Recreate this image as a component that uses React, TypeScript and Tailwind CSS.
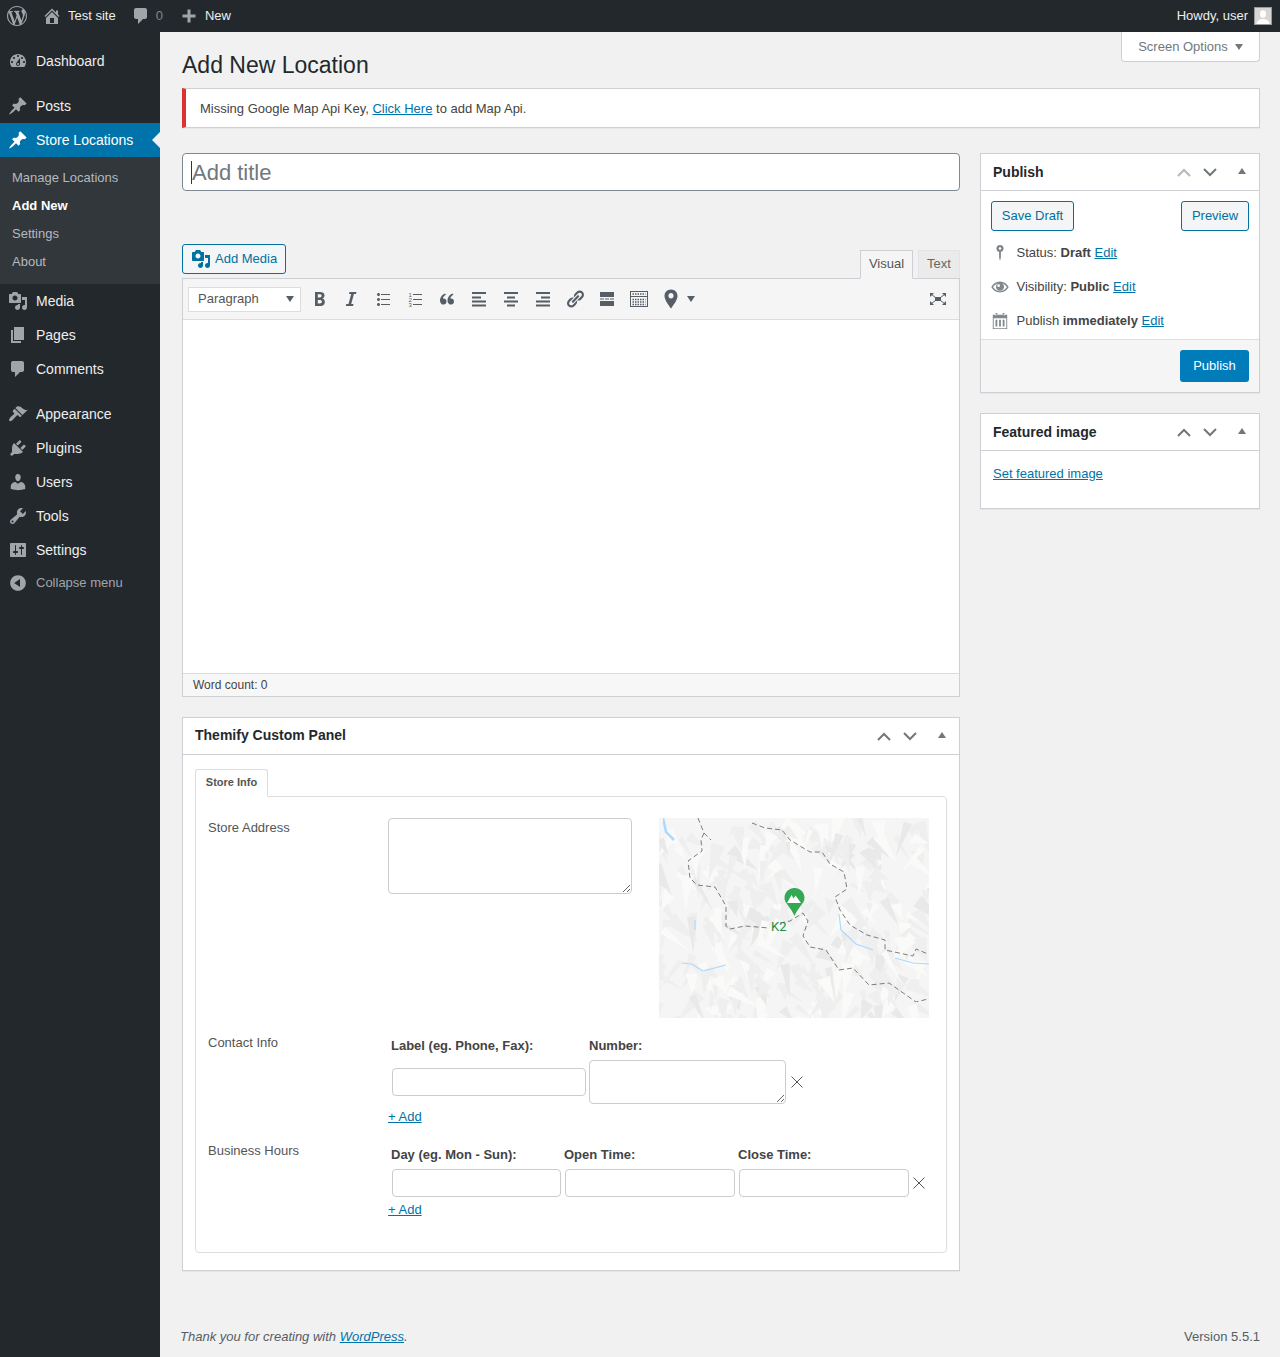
import type { ReactNode } from "react";

const P = {
  wp: "M20 10c0-5.51-4.49-10-10-10C4.48 0 0 4.49 0 10c0 5.52 4.48 10 10 10 5.51 0 10-4.48 10-10zM7.78 15.37L4.37 6.22c.55-.02 1.17-.08 1.17-.08.5-.06.44-1.13-.06-1.11 0 0-1.45.11-2.37.11-.18 0-.37 0-.58-.01C4.12 2.69 6.87 1.11 10 1.11c2.33 0 4.45.87 6.05 2.34-.68-.11-1.65.39-1.65 1.58 0 .74.45 1.36.9 2.1.35.61.55 1.36.55 2.46 0 1.49-1.4 5-1.4 5l-3.03-8.37c.54-.02.82-.17.82-.17.5-.05.44-1.25-.06-1.22 0 0-1.44.12-2.38.12-.87 0-2.33-.12-2.33-.12-.5-.03-.56 1.2-.06 1.22l.92.08 1.26 3.41zM17.41 10c.24-.64.74-1.87.43-4.25.7 1.29 1.05 2.71 1.05 4.25 0 3.29-1.73 6.24-4.4 7.78.97-2.59 1.94-5.2 2.92-7.78zM6.1 18.09C3.12 16.65 1.11 13.53 1.11 10c0-1.3.23-2.48.72-3.59C3.25 10.3 4.67 14.2 6.1 18.09zm4.03-6.63l2.58 6.98c-.86.29-1.76.45-2.71.45-.79 0-1.57-.11-2.29-.33.81-2.38 1.62-4.74 2.42-7.1z",
  home: "M16 8.5l1.53 1.53-1.06 1.06L10 4.62l-6.47 6.47-1.06-1.06L10 2.5l4 4v-2h2v4zm-6-2.46l6 5.99V18H4v-5.97zM12 17v-5H8v5h4z",
  comment: "M5 2h9c1.1 0 2 .9 2 2v7c0 1.1-.9 2-2 2h-2l-5 5v-5H5c-1.1 0-2-.9-2-2V4c0-1.1.9-2 2-2z",
  plus: "M16.500 8.500v3h-5v5h-3v-5h-5v-3h5v-5h3v5z",
  dashboard: "M3.76 16h12.48c1.1-1.37 1.76-3.11 1.76-5 0-4.42-3.58-8-8-8s-8 3.58-8 8c0 1.89.66 3.63 1.76 5zM10 4c.55 0 1 .45 1 1s-.45 1-1 1-1-.45-1-1 .45-1 1-1zM6 6c.55 0 1 .45 1 1s-.45 1-1 1-1-.45-1-1 .45-1 1-1zm8 0c.55 0 1 .45 1 1s-.45 1-1 1-1-.45-1-1 .45-1 1-1zm-5.37 5.55L12 7v6c0 1.1-.9 2-2 2s-2-.9-2-2c0-.57.24-1.08.63-1.45zM4 10c.55 0 1 .45 1 1s-.45 1-1 1-1-.45-1-1 .45-1 1-1zm12 0c.55 0 1 .45 1 1s-.45 1-1 1-1-.45-1-1 .45-1 1-1zm-5 3c0-.55-.45-1-1-1s-1 .45-1 1 .45 1 1 1 1-.45 1-1z",
  pin: "M10.44 3.02l1.82-1.82 6.36 6.35-1.83 1.82c-1.05-.68-2.48-.57-3.41.36l-.75.75c-.92.93-1.04 2.35-.35 3.41l-1.83 1.82-2.41-2.41-2.8 2.79c-.42.42-3.38 2.71-3.8 2.29s1.86-3.39 2.28-3.81l2.79-2.79L4.1 9.36l1.83-1.82c1.05.69 2.48.57 3.4-.36l.75-.75c.93-.92 1.05-2.35.36-3.41z",
  media: "M13 11V4c0-.55-.45-1-1-1h-1.67L9 1H5L3.67 3H2c-.55 0-1 .45-1 1v7c0 .55.45 1 1 1h10c.55 0 1-.45 1-1zM7 4.5c1.38 0 2.5 1.12 2.5 2.5S8.38 9.5 7 9.5 4.5 8.38 4.5 7 5.62 4.5 7 4.5zM14 6h5v10.5c0 1.38-1.12 2.5-2.5 2.5S14 17.88 14 16.5s1.12-2.5 2.5-2.5c.17 0 .34.02.5.05V9h-3V6zm-4 8.05V13h2v3.5c0 1.38-1.12 2.5-2.5 2.5S7 17.88 7 16.5 8.12 14 9.5 14c.17 0 .34.02.5.05z",
  page: "M6 15V2h10v13H6zm-1 1h8v2H3V5h2v11z",
  appearance: "M14.48 11.06L7.41 3.99l1.5-1.5c.5-.56 2.3-.47 3.51.32 1.21.8 1.43 1.28 2.91 2.1 1.18.64 2.45 1.26 4.45.85zm-.71.71L6.7 4.7 4.93 6.47c-.39.39-.39 1.02 0 1.41l1.06 1.06c.39.39.39 1.03 0 1.42-.6.6-1.43 1.11-2.21 1.69-.35.26-.7.53-1.01.84-1.43 1.43-1.87 2.98-1.57 3.7.3.7 1.5.9 3.2-.4.8-.6 1.5-1.6 2.3-2.5.8-.9 1.6-1.6 2.2-2.1.4-.39 1.03-.39 1.42 0l1.06 1.06c.39.39 1.02.39 1.41 0z",
  plugins: "M13.11 4.36L9.87 7.6 8 5.73l3.24-3.24c.35-.34 1.05-.2 1.56.32.52.51.66 1.21.31 1.55zm-8 1.77l.91-1.12 9.01 9.01-1.19.84c-.71.71-2.63 1.16-3.82 1.16H6.14L4.9 17.26c-.59.59-1.54.59-2.12 0-.59-.58-.59-1.53 0-2.12l1.24-1.24v-3.88c0-1.13.4-3.19 1.09-3.89zm7.26 3.97l3.24-3.24c.34-.35 1.04-.21 1.55.31.52.51.66 1.21.31 1.55l-3.24 3.25z",
  users: "M10 9.25c-2.27 0-2.73-3.44-2.73-3.44C7 4.02 7.82 2 9.97 2c2.16 0 2.98 2.02 2.71 3.81 0 0-.41 3.44-2.68 3.44zm0 2.57L12.72 10c2.39 0 4.52 2.33 4.52 4.53v2.49s-3.65 1.13-7.24 1.13c-3.65 0-7.24-1.13-7.24-1.13v-2.49c0-2.25 1.94-4.48 4.47-4.48z",
  tools: "M16.68 9.77c-1.34 1.34-3.3 1.67-4.95.99l-5.41 6.52c-.99.99-2.59.99-3.58 0s-.99-2.59 0-3.57l6.52-5.42c-.68-1.65-.35-3.61.99-4.95 1.28-1.28 3.12-1.62 4.72-1.06l-2.89 2.89 2.82 2.82 2.86-2.87c.53 1.58.18 3.39-1.08 4.65zM3.81 16.21c.4.39 1.04.39 1.43 0 .4-.4.4-1.04 0-1.43-.39-.4-1.03-.4-1.43 0-.39.39-.39 1.03 0 1.43z",
  settings: "M18 16V4c0-.55-.45-1-1-1H3c-.55 0-1 .45-1 1v12c0 .55.45 1 1 1h14c.55 0 1-.45 1-1zM8 11h1c.55 0 1 .45 1 1s-.45 1-1 1H8v1.5c0 .28-.22.5-.5.5s-.5-.22-.5-.5V13H6c-.55 0-1-.45-1-1s.45-1 1-1h1V5.5c0-.28.22-.5.5-.5s.5.22.5.5V11zm5-2h-1c-.55 0-1-.45-1-1s.45-1 1-1h1V5.5c0-.28.22-.5.5-.5s.5.22.5.5V7h1c.55 0 1 .45 1 1s-.45 1-1 1h-1v5.5c0 .28-.22.5-.5.5s-.5-.22-.5-.5V9z",
  collapse: "M10 2.16c4.33 0 7.84 3.51 7.84 7.84s-3.51 7.84-7.84 7.84S2.16 14.33 2.16 10 5.71 2.16 10 2.16zm2 11.72V6.12L6.18 9.97z",
  bold: "M6 3v14h5c1.500 0 2.700-.4 3.500-1.100.9-.7 1.300-1.700 1.300-3 0-.9-.2-1.600-.6-2.200s-1-.9-1.800-1.100v-.1c.6-.1 1.100-.4 1.500-1s.6-1.200.6-2c0-1.200-.4-2.100-1.300-2.700C13.400 3.300 12 3 10.200 3H6zm2.800 5.500V5.300h1.500c.8 0 1.400.1 1.700.3.4.3.6.7.6 1.200 0 .6-.2 1-.5 1.300s-.9.400-1.700.4H8.800zm0 2.400h1.700c1.600 0 2.400.6 2.400 1.800 0 .6-.2 1.100-.6 1.400s-.9.500-1.700.500H8.800v-3.700z",
  italic: "M15.500 3h-7l-.5 2h2.200l-2.700 10H5.300l-.5 2h7.200l.5-2H10.200l2.700-10H15z",
  ul: "M5.5 7C4.67 7 4 6.33 4 5.5 4 4.68 4.67 4 5.5 4 6.32 4 7 4.68 7 5.5 7 6.33 6.32 7 5.5 7zM8 5h9v1H8V5zm-2.5 7c-.83 0-1.5-.67-1.5-1.5C4 9.68 4.67 9 5.5 9c.82 0 1.5.68 1.5 1.5 0 .83-.68 1.5-1.5 1.5zM8 10h9v1H8v-1zm-2.5 7c-.83 0-1.5-.67-1.5-1.5 0-.82.67-1.5 1.5-1.5.82 0 1.5.68 1.5 1.5 0 .83-.68 1.500-1.500 1.500zM8 15h9v1H8v-1z",
  quote: "M9.500 12.600c0 1.800-1.300 3-2.900 3C4.700 15.600 3 14 3 11.400 3 8.200 5.200 5.400 8.200 4.400l.7 1.400C7.100 6.700 6 8 5.900 9.500c2-.3 3.600 1 3.600 3.100zm7.500 0c0 1.800-1.300 3-2.900 3-1.900 0-3.600-1.600-3.600-4.200 0-3.200 2.200-6 5.200-7l.7 1.400c-1.800.9-2.900 2.200-3 3.700 2-.3 3.600 1 3.600 3.100z",
  alignLeft: "M3 3h14v2H3zM3 7.500h9v2H3zM3 11.500h14v2H3zM3 15.500h14v2H3z",
  alignCenter: "M3 3h14v2H3zM6 7.500h8v2H6zM3 11.500h14v2H3zM6 15.500h8v2H6z",
  alignRight: "M3 3h14v2H3zM8 7.500h9v2H8zM3 11.500h14v2H3zM3 15.500h14v2H3z",
  link: "M17.74 2.76c1.68 1.69 1.68 4.41 0 6.1l-1.53 1.52c-1.12 1.12-2.7 1.47-4.14 1.09l2.62-2.61.76-.77.76-.76c.84-.84.84-2.2 0-3.04-.84-.85-2.2-.85-3.04 0l-.77.76-3.38 3.38c-.37-1.44-.02-3.02 1.1-4.14l1.52-1.53c1.69-1.68 4.42-1.68 6.1 0zM8.59 13.43l5.34-5.34c.42-.42.42-1.1 0-1.52-.44-.43-1.13-.39-1.53 0l-5.33 5.34c-.42.42-.42 1.1 0 1.52.44.43 1.13.39 1.52 0zm-.76 2.29l4.14-4.15c.38 1.44.03 3.02-1.09 4.14l-1.52 1.53c-1.69 1.68-4.41 1.68-6.1 0-1.68-1.68-1.68-4.42 0-6.1l1.53-1.52c1.12-1.12 2.7-1.47 4.14-1.1l-4.14 4.15c-.85.84-.85 2.2 0 3.05.84.84 2.2.84 3.04 0z",
  more: "M3 3h14v5H3zM3 9.500h4v1H3zM8 9.500h4v1H8zM13 9.500h4v1h-4zM3 12h14v5H3z",
  mapPin: "M10 .5C6 .5 3.500 3.400 3.500 6.900c0 4 4 8.800 6.500 12.600 2.500-3.800 6.500-8.600 6.500-12.600C16.500 3.400 14 .5 10 .5zm0 9c-1.500 0-2.600-1.200-2.600-2.700S8.500 4.100 10 4.100s2.600 1.200 2.600 2.700S11.500 9.500 10 9.500z",
  status: "M10 1a4 4 0 0 1 1 7.870V15l-1 4-1-4V8.870A4 4 0 0 1 10 1zm0 2.500a1.400 1.400 0 1 0 0 2.800 1.400 1.400 0 0 0 0-2.800z",
  eye: "M10 4C5.700 4 2.300 6.500.300 10c2 3.500 5.400 6 9.700 6s7.700-2.500 9.700-6C17.700 6.500 14.300 4 10 4zM8 5.700a4.500 4.500 0 1 0 4 0c2.200.5 4.200 2.200 5.700 4.300-1.900 2.700-4.500 4.600-7.700 4.600S4.200 12.700 2.300 10C3.800 7.900 5.800 6.200 8 5.700zM8.500 7a1.500 1.500 0 1 1 0 3 1.500 1.500 0 0 1 0-3z",
  calendar: "M5 1h2v2h6V1h2v2h3v16H2V3h3zm-2 6v11h14V7zm2-4.900V4h1V2.100zm9 0V4h1V2.100zM5 8.500h2V16H5zm4 0h2V16H9zm4 0h2V16h-2z",
};

function Icon({ d, className }: { d: string; className?: string }) {
  return (
    <svg viewBox="0 0 20 20" fill="currentColor" fillRule="evenodd" className={className}>
      <path d={d} />
    </svg>
  );
}

function MenuItem({ icon, label, active, className }: { icon: string; label: string; active?: boolean; className?: string }) {
  return (
    <div className={`relative flex h-[34px] items-center ${active ? "bg-[#0073aa] text-white" : "text-[#eeeeee]"} ${className ?? ""}`}>
      <Icon d={icon} className={`ml-[8px] h-5 w-5 ${active ? "text-white" : "text-[#a0a5aa]"}`} />
      <span className="ml-2 text-[14px]">{label}</span>
      {active && (
        <span className="absolute right-0 top-[9px] h-0 w-0 border-y-8 border-r-8 border-y-transparent border-r-[#f1f1f1]" />
      )}
    </div>
  );
}

function Sidebar() {
  return (
    <aside className="w-[160px] shrink-0 bg-[#23282d] pt-3">
      <MenuItem icon={P.dashboard} label="Dashboard" className="mb-[11px]" />
      <MenuItem icon={P.pin} label="Posts" />
      <MenuItem icon={P.pin} label="Store Locations" active />
      <div className="flex flex-col bg-[#32373c] pb-[8px] pl-3 pt-[7px] text-[13px] leading-[28px] text-[#b4b9be]">
        <span>Manage Locations</span>
        <span className="font-bold text-white">Add New</span>
        <span>Settings</span>
        <span>About</span>
      </div>
      <MenuItem icon={P.media} label="Media" />
      <MenuItem icon={P.page} label="Pages" />
      <MenuItem icon={P.comment} label="Comments" className="mb-[11px]" />
      <MenuItem icon={P.appearance} label="Appearance" />
      <MenuItem icon={P.plugins} label="Plugins" />
      <MenuItem icon={P.users} label="Users" />
      <MenuItem icon={P.tools} label="Tools" />
      <MenuItem icon={P.settings} label="Settings" />
      <div className="flex h-[32px] items-center text-[#a0a5aa]">
        <Icon d={P.collapse} className="ml-[8px] h-5 w-5" />
        <span className="ml-2 text-[13px]">Collapse menu</span>
      </div>
    </aside>
  );
}

function TopBar() {
  return (
    <header className="flex h-8 items-center bg-[#23282d] text-[13px] text-[#eeeeee]">
      <Icon d={P.wp} className="ml-[7px] h-5 w-5 text-[#a0a5aa]" />
      <Icon d={P.home} className="ml-[15px] h-5 w-5 text-[#a0a5aa]" />
      <span className="ml-[6px]">Test site</span>
      <Icon d={P.comment} className="ml-[15px] h-5 w-5 text-[#a0a5aa]" />
      <span className="ml-[5px] text-[#82878c]">0</span>
      <Icon d={P.plus} className="ml-[16px] h-5 w-5 text-[#a0a5aa]" />
      <span className="ml-[6px]">New</span>
      <span className="ml-auto">Howdy, user</span>
      <svg viewBox="0 0 18 18" className="ml-[6px] mr-2 h-[18px] w-[18px]">
        <rect width="18" height="18" fill="#9a9a9a" />
        <rect x="1" y="1" width="16" height="16" fill="#d6d6d6" />
        <ellipse cx="9" cy="7" rx="3" ry="3.800" fill="#fff" />
        <path d="M2.500 17c.3-3.500 3-5 6.500-5s6.200 1.500 6.500 5z" fill="#fff" />
      </svg>
    </header>
  );
}

function BoxControls({ muted }: { muted?: boolean }) {
  return (
    <div className="flex items-center">
      <svg viewBox="0 0 14 9" fill="none" strokeWidth="2" className={`h-[9px] w-[14px] ${muted ? "stroke-[#b4b9be]" : "stroke-[#72777c]"}`}>
        <path d="M1 8l6-6 6 6" />
      </svg>
      <svg viewBox="0 0 14 9" fill="none" strokeWidth="2" className="ml-3 h-[9px] w-[14px] stroke-[#72777c]">
        <path d="M1 1l6 6 6-6" />
      </svg>
      <svg viewBox="0 0 8 6" className="mb-[2px] ml-[21px] mr-[13px] h-[6px] w-2 fill-[#72777c]">
        <path d="M4 0l4 6H0z" />
      </svg>
    </div>
  );
}

function Postbox({ title, muted, children, className, titleClass }: { title: string; muted?: boolean; children: ReactNode; className?: string; titleClass?: string }) {
  return (
    <section className={`border border-[#ccd0d4] bg-white shadow-[0_1px_1px_rgba(0,0,0,0.04)] ${className ?? ""}`}>
      <div className="flex h-[37px] items-center justify-between border-b border-[#ccd0d4] pl-3">
        <h2 className={`text-[14px] font-bold text-[#23282d] ${titleClass ?? ""}`}>{title}</h2>
        <BoxControls muted={muted} />
      </div>
      {children}
    </section>
  );
}

function OutlineButton({ children, className }: { children: ReactNode; className?: string }) {
  return (
    <button className={`h-[30px] rounded-[3px] border border-[#0071a1] bg-[#f3f5f6] text-[13px] text-[#0071a1] ${className ?? ""}`}>
      {children}
    </button>
  );
}

function TextLink({ children }: { children: ReactNode }) {
  return <a className="text-[#0073aa] underline">{children}</a>;
}

function Toolbar() {
  const icons = [P.bold, P.italic, P.ul];
  return (
    <div className="flex h-[41px] items-center border-b border-[#dcdcde] bg-[#f5f5f5] pl-[5px] text-[#555d66]">
      <div className="flex h-[25px] w-[113px] items-center justify-between border border-[#dddddd] bg-white pl-[9px] pr-[6px] text-[13px] text-[#555555]">
        <span>Paragraph</span>
        <svg viewBox="0 0 8 6" className="h-[6px] w-2 fill-[#555d66]">
          <path d="M0 0h8L4 6z" />
        </svg>
      </div>
      <div className="ml-2 flex gap-3">
        {icons.map((d) => (
          <Icon key={d} d={d} className="h-5 w-5" />
        ))}
        <svg viewBox="0 0 20 20" className="h-5 w-5 fill-[#555d66]">
          <text x="3.500" y="7.500" fontSize="6" fontFamily="Liberation Sans, sans-serif">1</text>
          <text x="3.500" y="12.500" fontSize="6" fontFamily="Liberation Sans, sans-serif">2</text>
          <text x="3.500" y="17.500" fontSize="6" fontFamily="Liberation Sans, sans-serif">3</text>
          <path d="M8 5h9v1H8zM8 10h9v1H8zM8 15h9v1H8z" />
        </svg>
        <Icon d={P.quote} className="h-5 w-5" />
        <Icon d={P.alignLeft} className="h-5 w-5" />
        <Icon d={P.alignCenter} className="h-5 w-5" />
        <Icon d={P.alignRight} className="h-5 w-5" />
        <Icon d={P.link} className="h-5 w-5" />
        <Icon d={P.more} className="h-5 w-5" />
        <svg viewBox="0 0 20 20" fill="none" className="h-5 w-5 stroke-[#555d66]">
          <rect x="1.500" y="2.500" width="17" height="15" />
          <path d="M1.500 7.500h17" />
          <path d="M3.500 5h13M3.500 10.500h13M3.500 13h13M3.500 15.500h13" strokeWidth="1.500" strokeDasharray="1.500 1" />
        </svg>
        <Icon d={P.mapPin} className="h-5 w-5" />
      </div>
      <svg viewBox="0 0 8 6" className="ml-[6px] h-[6px] w-2 fill-[#555d66]">
        <path d="M0 0h8L4 6z" />
      </svg>
      <svg viewBox="0 0 20 20" className="ml-auto mr-[11px] h-5 w-5 fill-[#555d66]">
        <path d="M7 8h6v4H7z" />
        <path d="M2 4h4L2 8zM18 4v4l-4-4zM2 16v-4l4 4zM18 16h-4l4-4z" />
        <path d="M3 5l5 4M17 5l-5 4M3 15l5-4M17 15l-5-4" stroke="#555d66" fill="none" />
      </svg>
    </div>
  );
}

function Editor() {
  return (
    <div className="mt-[53px]">
      <div className="flex items-end justify-between">
        <OutlineButton className="mb-[4px] flex w-[104px] items-center pl-[8px]">
          <Icon d={P.media} className="h-[20px] w-[20px]" />
          <span className="ml-[4px]">Add Media</span>
        </OutlineButton>
        <div className="flex text-[13px] text-[#555555]">
          <div className="relative -mb-px h-[29px] w-[53px] border border-[#ccd0d4] border-b-[#f5f5f5] bg-[#f5f5f5] text-center leading-[26px]">
            Visual
          </div>
          <div className="ml-[5px] h-[28px] w-[42px] border border-b-0 border-[#e2e4e7] bg-[#ebebeb] text-center leading-[26px] text-[#666666]">
            Text
          </div>
        </div>
      </div>
      <div className="border border-[#ccd0d4] bg-white">
        <Toolbar />
        <div className="h-[353px] bg-white" />
        <div className="flex h-[23px] items-center border-t border-[#dcdcde] bg-[#f7f7f7] pl-[10px] text-[12px] text-[#444444]">
          Word count: 0
        </div>
      </div>
    </div>
  );
}

// pseudo-random terrain facets for the map tile
function terrain() {
  let seed = 4711;
  const rnd = () => {
    seed = (seed * 16807) % 2147483647;
    return seed / 2147483647;
  };
  const out: { points: string; fill: string }[] = [];
  for (let i = 0; i < 300; i++) {
    const x = rnd() * 280 - 5;
    const y = rnd() * 210 - 5;
    const a = 0.6 + rnd() * 1.9;
    const len = 14 + rnd() * 26;
    const wide = 5 + rnd() * 10;
    const pts = [
      [x, y],
      [x + Math.cos(a) * len, y + Math.sin(a) * len],
      [x + Math.cos(a + 1.4) * wide, y + Math.sin(a + 1.4) * wide],
    ];
    const tone = rnd();
    out.push({
      points: pts.map((p) => `${p[0].toFixed(1)},${p[1].toFixed(1)}`).join(" "),
      fill: tone < 0.55 ? "#efefef" : tone < 0.85 ? "#fafaf8" : "#e9e9e9",
    });
  }
  return out;
}

const facets = terrain();

function MapTile() {
  return (
    <svg viewBox="0 0 270 200" className="h-[200px] w-[270px] shrink-0 bg-[#f5f5f5]">
      <defs>
        <filter id="soft" x="0" y="0" width="100%" height="100%">
          <feGaussianBlur stdDeviation="0.7" />
        </filter>
        <filter id="softLine" x="0" y="0" width="100%" height="100%">
          <feGaussianBlur stdDeviation="0.25" />
        </filter>
      </defs>
      <g filter="url(#soft)">
        {facets.map((f, i) => (
          <polygon key={i} points={f.points} fill={f.fill} />
        ))}
      </g>
      <g fill="none" stroke="#aadaff" strokeWidth="1.200" filter="url(#softLine)">
        <path d="M4 0l3 14 8 8" strokeWidth="2.500" />
        <path d="M23 145l10 1 11 7 23-6" />
        <path d="M180 96l2 16 15 14 17 6" />
        <path d="M236 140l18 5 16 1" />
        <path d="M36 102v10" />
      </g>
      <g fill="none" stroke="#6f6f6f" strokeWidth="0.900" strokeDasharray="5 3" filter="url(#softLine)">
        <path d="M39 0l6 15-3 7 1 11-14 10 2 17 7 7 18 2 11 19v20l4 3 15-3 24 2M121 105l10-2 13-8 5 8-5 15 7 11 16 3 13 20 14-2 16 17 20-2 27 19 12-3" />
        <path d="M93 5l13 5 17 2 8 10 20 12 12 0 8 12 14 8 3 17-12 8 5 13 10 15 17 10 18 5v10l28 6 3-7 12 5" />
        <path d="M45 15l7 7" />
      </g>
      <path d="M135.500 70c-5.500 0-10 4.300-10 9.800 0 6 6.500 9.500 10 18.200 3.500-8.700 10-12.200 10-18.200 0-5.500-4.500-9.800-10-9.800z" fill="#34a853" />
      <path d="M128 85l4.500-8 2.200 3.500 1.800-3 5.500 7.500z" fill="#fff" />
      <text x="112" y="113" fontSize="13" fill="#1e8e3e" fontFamily="Roboto, sans-serif">K2</text>
    </svg>
  );
}

function Cross() {
  return (
    <svg viewBox="0 0 12 12" className="h-3 w-3 shrink-0 stroke-[#555555]" fill="none">
      <path d="M.5.5l11 11M11.500.5l-11 11" />
    </svg>
  );
}

const fieldClass = "h-[28px] rounded-[4px] border border-[#cccccc] bg-white";

function AddLink() {
  return (
    <div className="mt-[3px] text-[13px]">
      <TextLink>+ Add</TextLink>
    </div>
  );
}

function CustomPanel() {
  return (
    <Postbox title="Themify Custom Panel" titleClass="-mt-[2px]" className="mt-5 h-[554px]">
      <div className="px-3 pt-[14px]">
        <div className="relative z-10 -mb-px h-[28px] w-[73px] rounded-t-[3px] border border-[#dddddd] border-b-white bg-white text-center text-[11px] font-bold leading-[24px] text-[#555555]">
          Store Info
        </div>
        <div className="h-[457px] rounded-b-[4px] rounded-tr-[4px] border border-[#dddddd] pl-3 pt-[21px] text-[13px] text-[#555555]">
          <div className="flex h-[200px]">
            <div className="w-[180px]">Store Address</div>
            <textarea className="h-[76px] w-[244px] rounded-[4px] border border-[#cccccc] bg-white" />
            <div className="ml-[27px]">
              <MapTile />
            </div>
          </div>
          <div className="mt-[15px] flex">
            <div className="w-[180px]">Contact Info</div>
            <div>
              <div className="flex pl-[3px] pt-[5px] font-bold leading-[15px] text-[#444444]">
                <span className="w-[198px]">Label (eg. Phone, Fax):</span>
                <span>Number:</span>
              </div>
              <div className="mt-[7px] flex items-center">
                <input className={`ml-1 w-[194px] ${fieldClass}`} />
                <textarea className="ml-[3px] h-[44px] w-[197px] rounded-[4px] border border-[#cccccc] bg-white" />
                <span className="ml-[5px]">
                  <Cross />
                </span>
              </div>
              <AddLink />
            </div>
          </div>
          <div className="mt-[14px] flex">
            <div className="w-[180px]">Business Hours</div>
            <div>
              <div className="flex pl-[3px] pt-[6px] font-bold leading-[15px] text-[#444444]">
                <span className="w-[173px]">Day (eg. Mon - Sun):</span>
                <span className="w-[174px]">Open Time:</span>
                <span>Close Time:</span>
              </div>
              <div className="mt-[7px] flex items-center">
                <input className={`ml-1 w-[169px] ${fieldClass}`} />
                <input className={`ml-1 w-[170px] ${fieldClass}`} />
                <input className={`ml-1 w-[170px] ${fieldClass}`} />
                <span className="ml-[4px]">
                  <Cross />
                </span>
              </div>
              <AddLink />
            </div>
          </div>
        </div>
      </div>
    </Postbox>
  );
}

function PublishBox() {
  const rows = [
    { icon: P.status, content: <>Status: <b>Draft</b> <TextLink>Edit</TextLink></> },
    { icon: P.eye, content: <>Visibility: <b>Public</b> <TextLink>Edit</TextLink></> },
    { icon: P.calendar, content: <>Publish <b>immediately</b> <TextLink>Edit</TextLink></> },
  ];
  return (
    <Postbox title="Publish" muted>
      <div className="flex justify-between px-[10px] pt-[10px]">
        <OutlineButton className="w-[83px]">Save Draft</OutlineButton>
        <OutlineButton className="w-[68px]">Preview</OutlineButton>
      </div>
      <div className="flex flex-col pb-px pt-[5px] text-[13px] text-[#444444]">
        {rows.map((row) => (
          <div key={row.icon} className="flex h-[34px] items-center pl-[10px]">
            <Icon d={row.icon} className="h-[18px] w-[18px] text-[#82878c]" />
            <span className="ml-[7.5px]">{row.content}</span>
          </div>
        ))}
      </div>
      <div className="flex h-[53px] items-center justify-end border-t border-[#dddddd] bg-[#f5f5f5] pr-[10px]">
        <button className="h-[32px] w-[69px] rounded-[3px] bg-[#007cba] text-[13px] text-white">Publish</button>
      </div>
    </Postbox>
  );
}

function Main() {
  return (
    <main className="flex min-w-0 flex-1 flex-col pl-[22px] pr-5">
      <div className="flex items-start justify-between">
        <h1 className="pt-[16px] text-[23px] leading-[34px] text-[#23282d]">Add New Location</h1>
        <div className="flex h-[30px] w-[139px] items-center justify-center gap-[7px] rounded-b-[4px] border border-t-0 border-[#ccd0d4] bg-white text-[13px] text-[#72777c]">
          Screen Options
          <svg viewBox="0 0 8 6" className="h-[6px] w-2 fill-[#72777c]">
            <path d="M0 0h8L4 6z" />
          </svg>
        </div>
      </div>
      <div className="mt-[6px] flex h-[40px] items-center border border-l-4 border-[#ccd0d4] border-l-[#dc3232] bg-white pl-[14px] pt-[1px] text-[13px] text-[#444444] shadow-[0_1px_1px_rgba(0,0,0,0.04)]">
        <span>Missing Google Map Api Key, <TextLink>Click Here</TextLink> to add Map Api.</span>
      </div>
      <div className="mt-[25px] flex gap-5">
        <div className="w-[778px] shrink-0">
          <div className="flex h-[38px] items-center rounded-[4px] border border-[#7e8993] bg-white pl-2">
            <span className="h-[23px] w-px bg-[#32373c]" />
            <input placeholder="Add title" className="min-w-0 flex-1 bg-transparent text-[22px] outline-none placeholder:text-[#72777c]" />
          </div>
          <Editor />
          <CustomPanel />
        </div>
        <div className="flex flex-1 flex-col gap-5">
          <PublishBox />
          <Postbox title="Featured image">
            <div className="h-[57px] pl-3 pt-[13px] text-[13px]">
              <TextLink>Set featured image</TextLink>
            </div>
          </Postbox>
        </div>
      </div>
      <footer className="mt-auto flex h-[31px] justify-between pt-[1px] text-[13px] text-[#555d66]">
        <span className="-ml-[2px] italic">Thank you for creating with <TextLink>WordPress</TextLink>.</span>
        <span>Version 5.5.1</span>
      </footer>
    </main>
  );
}

export default function App() {
  return (
    <div className="flex h-[1357px] flex-col bg-[#f1f1f1] font-['Liberation_Sans',Arial,sans-serif]">
      <TopBar />
      <div className="flex flex-1">
        <Sidebar />
        <Main />
      </div>
    </div>
  );
}
